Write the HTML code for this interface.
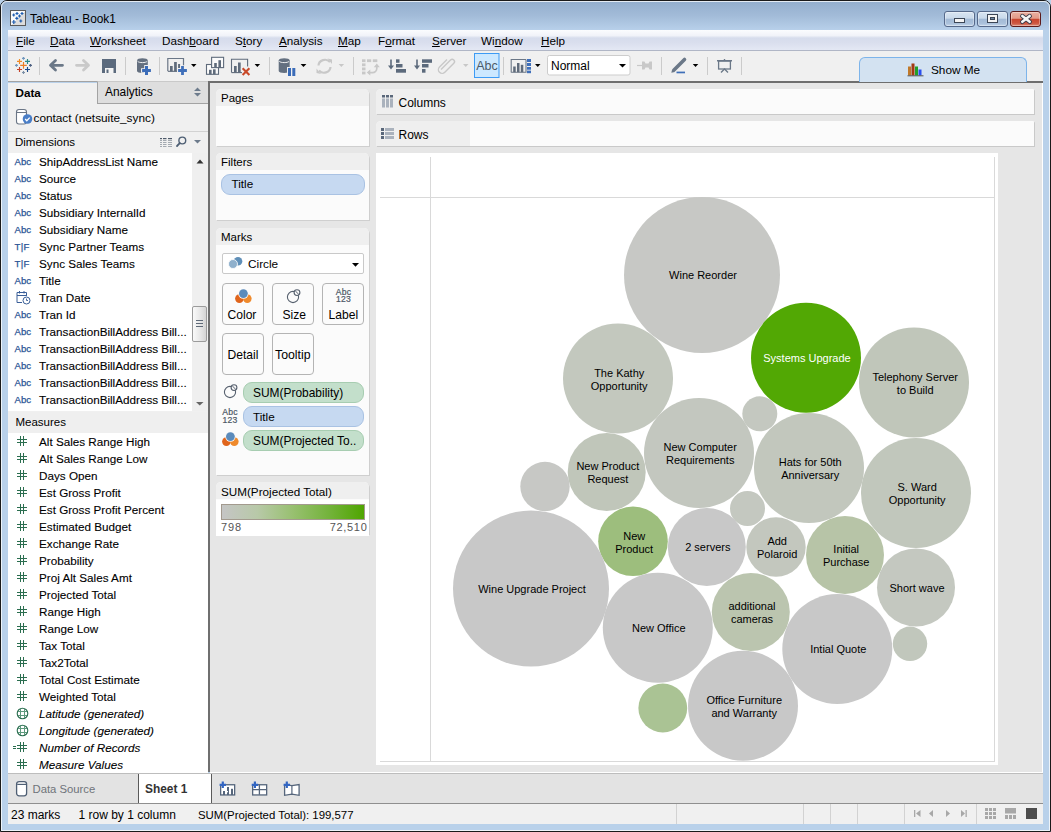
<!DOCTYPE html>
<html><head><meta charset="utf-8">
<style>
*{box-sizing:border-box;margin:0;padding:0}
html,body{width:1051px;height:832px;overflow:hidden;background:#b9d1ea}
body{font-family:"Liberation Sans",sans-serif;font-size:12px;color:#000;position:relative}
.a{position:absolute}
.t{position:absolute;white-space:nowrap;line-height:14px}
/* frame */
#outer{left:0;top:0;width:1051px;height:832px;border:1px solid #1a1a1a;border-radius:7px 7px 0 0}
#titlebar{left:1px;top:1px;width:1049px;height:29px;border-radius:6px 6px 0 0;background:linear-gradient(#93aecd,#a2bbd8 50%,#b8d0ea)}
.wbtn{position:absolute;top:10.5px;height:16.5px;border:1px solid #56698a;border-radius:3px;background:linear-gradient(#d9e5f2 0,#c9d9ea 45%,#a3bad6 50%,#a9c0da 80%,#c3d5ea 100%);box-shadow:inset 0 0 0 1px rgba(255,255,255,0.35)}
/* client */
#menubar{left:8px;top:30px;width:1035px;height:21px;background:linear-gradient(#fbfcfe 0,#f1f3f9 28%,#d6dcec 40%,#dadfee 65%,#e4e8f4 100%);border-bottom:1px solid #b0b6c6}
.menu{position:absolute;top:34px;font-size:11.7px;line-height:14px;white-space:nowrap;color:#000}
#toolbar{left:8px;top:51px;width:1035px;height:30px;background:#f0f0f0}
#tbline{left:208px;top:81px;width:835px;height:2px;background:#6e6e6e}
.sep{position:absolute;top:57px;width:1px;height:18px;background:#cfcfcf}
/* left panel */
#left{left:8px;top:83px;width:200px;height:690px;background:#f0f0f0}
#vsplit{left:208px;top:81px;width:2px;height:691px;background:#6f6f6f}
#mid{left:210px;top:83px;width:166px;height:689px;background:#e6e6e6}
#canvas{left:376px;top:83px;width:667px;height:689px;background:#e6e6e6}
.card{position:absolute;left:216px;width:153px;background:#fbfbfb;border-radius:5px 5px 0 0;box-shadow:1px 1px 0 #cfcfcf}
.card .hd{position:absolute;left:0;top:0;width:100%;height:17px;background:#efefef;border-radius:5px 5px 0 0}
.pill{position:absolute;border-radius:9px;border:1px solid #a9c2e3;background:#c6d9f1}
.pillg{position:absolute;border-radius:9px;border:1px solid #a7cdb1;background:#c3dfcb}
.mbtn{position:absolute;width:42px;height:42px;border:1px solid #b4b4b4;border-radius:4px;background:#fbfbfb}
.shelf{position:absolute;left:376px;width:658px;height:25px;background:#fbfbfb;border-radius:5px 1px 0 0;box-shadow:1px 1px 0 #c9c9c9}
.shelf .lb{position:absolute;left:0;top:0;width:94px;height:25px;background:#efefef;border-radius:5px 0 0 0}
#chart{left:376px;top:153px;width:622px;height:612px;background:#fff}
/* bottom */
#tabbar{left:8px;top:773px;width:1035px;height:30px;background:#e3e3e3}
#statusline{left:8px;top:803px;width:1035px;height:1px;background:#8f8f8f}
#status{left:8px;top:804px;width:1035px;height:20px;background:#f0f0f0}
.ssep{position:absolute;top:804px;width:1px;height:20px;background:#d2d2d2}
.row{position:absolute;left:39px;font-size:11.7px;-webkit-text-stroke:0.1px #000;white-space:nowrap;line-height:14px}
.ico{position:absolute;left:15px;font-size:9px;color:#44679a;white-space:nowrap;line-height:10px}
</style></head><body>
<div id="outer" class="a"></div>
<div id="titlebar" class="a"></div>
<div class="a" style="left:1px;top:1px;width:1049px;height:830px;border:1px solid rgba(255,255,255,0.75);border-radius:6px 6px 0 0"></div>
<div class="wbtn" style="left:944px;width:31px"></div>
<div class="wbtn" style="left:977px;width:31px"></div>
<div class="wbtn" style="left:1010px;width:31px;border-color:#5c1a1a;background:linear-gradient(#eab0a2 0,#e39a88 45%,#c9462f 52%,#cd5540 80%,#dc8a76 100%)"></div>

<div id="menubar" class="a"></div>
<div id="toolbar" class="a"></div>
<div id="tbline" class="a"></div>
<!--TITLE-->
<svg class="a" style="left:10px;top:10px" width="16" height="16" viewBox="0 0 16 16">
<rect x="0.5" y="0.5" width="15" height="15" fill="#fbfbfb" stroke="#5a5a5a"/>
<path d="M15 1.5L1.5 15H15z" fill="#dcdcdc"/>
<g stroke="#1d5cb0" stroke-width="1.2">
<path d="M3.7 3.5v3M2.2 5h3"/><path d="M7 2v3M5.5 3.5h3"/><path d="M12 2v3M10.5 3.5h3"/>
<path d="M9.5 4.5v3M8 6h3"/><path d="M6.8 6.8v3M5.3 8.3h3"/><path d="M3.8 10v4M1.8 12h4"/><path d="M10.8 9.5v3M9.3 11h3"/>
</g></svg>
<div class="t" style="left:30px;top:12px;font-size:11.9px;color:#000">Tableau - Book1</div>
<svg class="a" style="left:944px;top:10px" width="97" height="17">
<rect x="10.5" y="8.5" width="10" height="4" fill="#f4f4f4" stroke="#3c4656" stroke-width="1"/>
<rect x="43.5" y="4.5" width="10" height="8" fill="#f4f4f4" stroke="#3c4656" stroke-width="1"/>
<rect x="46.5" y="7.5" width="4" height="2" fill="#6f87a3" stroke="#3c4656" stroke-width="1"/>
<path d="M78.3 6L85.7 11.8M85.7 6L78.3 11.8" stroke="#3a3a48" stroke-width="4.4" stroke-linecap="round"/>
<path d="M78.3 6L85.7 11.8M85.7 6L78.3 11.8" stroke="#f4f4f4" stroke-width="2.6" stroke-linecap="round"/>
</svg>
<!--MENU-->
<div class="menu" style="left:16px"><u>F</u>ile</div>
<div class="menu" style="left:50px"><u>D</u>ata</div>
<div class="menu" style="left:90px"><u>W</u>orksheet</div>
<div class="menu" style="left:162px">Dash<u>b</u>oard</div>
<div class="menu" style="left:235px">S<u>t</u>ory</div>
<div class="menu" style="left:279px"><u>A</u>nalysis</div>
<div class="menu" style="left:338px"><u>M</u>ap</div>
<div class="menu" style="left:378px">F<u>o</u>rmat</div>
<div class="menu" style="left:432px"><u>S</u>erver</div>
<div class="menu" style="left:481px">Wi<u>n</u>dow</div>
<div class="menu" style="left:541px"><u>H</u>elp</div>
<!--TOOLBAR-->
<svg class="a" style="left:0;top:51px" width="760" height="30">
<g transform="translate(0,-51)">
<!-- tableau logo -->
<g stroke-width="1.15">
<path d="M23.5 62.1v6.6M20.2 65.4h6.6" stroke="#ee7d22"/>
<path d="M23.5 56.9v2.9M22.05 58.35h2.9" stroke="#6f96bd"/>
<path d="M23.5 71.05v2.9M22.05 72.5h2.9" stroke="#7a8ea6"/>
<path d="M16.5 63.95v2.9M15.05 65.4h2.9" stroke="#6f96bd"/>
<path d="M30.5 63.95v2.9M29.05 65.4h2.9" stroke="#4c5f80"/>
<path d="M19.5 58.9v5M17 61.4h5" stroke="#f08a25"/>
<path d="M27.5 58.9v5M25 61.4h5" stroke="#2b8a88"/>
<path d="M19.5 67v5M17 69.5h5" stroke="#c4432b"/>
<path d="M27.5 67v5M25 69.5h5" stroke="#1b4a88"/>
</g>
<g fill="#cbcbcb">
<rect x="39" y="57" width="1" height="18"/><rect x="125" y="57" width="1" height="18"/><rect x="159" y="57" width="1" height="18"/>
<rect x="269" y="57" width="1" height="18"/><rect x="353" y="57" width="1" height="18"/><rect x="503" y="57" width="1" height="18"/>
<rect x="661" y="57" width="1" height="18"/><rect x="707" y="57" width="1" height="18"/><rect x="741" y="57" width="1" height="18"/>
</g>
<!-- back / forward -->
<path d="M62.5 65.3H51 M55.5 60.5L50.5 65.3L55.5 70.1" fill="none" stroke="#6b7888" stroke-width="2.8" stroke-linecap="round" stroke-linejoin="round"/>
<path d="M76.5 65.3H88 M83.5 60.5L88.5 65.3L83.5 70.1" fill="none" stroke="#c9c9c9" stroke-width="2.8" stroke-linecap="round" stroke-linejoin="round"/>
<!-- save -->
<rect x="102" y="59" width="14" height="14" fill="#5b6a7d"/>
<rect x="105" y="68" width="8.5" height="5" fill="#f4f4f4"/>
<rect x="106.5" y="69.5" width="2" height="3.5" fill="#5b6a7d"/>
<!-- db plus -->
<path d="M137 60.5v10.5c0 1.2 2.4 1.9 5.4 1.9s5.4-.7 5.4-1.9V60.5c0-1.5-2.4-2.3-5.4-2.3s-5.4 .8-5.4 2.3z" fill="#647080"/>
<path d="M137.6 61.3c.8 .9 2.6 1.3 4.8 1.3s4-.4 4.8-1.3" fill="none" stroke="#f4f4f4" stroke-width="1"/>
<path d="M146.5 65v11M141 70.5h11" stroke="#f0f0f0" stroke-width="4.6"/>
<path d="M146.5 66.1v8.8M142.1 70.5h8.8" stroke="#3b6cb8" stroke-width="3"/>
<!-- chart plus -->
<path d="M167.8 71V58.5H183.5V66" fill="none" stroke="#6b7787" stroke-width="1.2"/>
<rect x="170" y="66" width="2.7" height="5.5" fill="#5f6b7b"/><rect x="174.1" y="62" width="2.7" height="9.5" fill="#5f6b7b"/><rect x="178.1" y="64" width="2" height="4" fill="#5f6b7b"/><path d="M167.8 71.3H177" stroke="#5f6b7b" stroke-width="1.1"/>
<path d="M182.5 65.3v10.4M177.3 70.5h10.4" stroke="#f0f0f0" stroke-width="4.5"/>
<path d="M182.5 66.1v8.8M178.1 70.5h8.8" stroke="#3f6fba" stroke-width="2.8"/>
<path d="M191 64h5.5l-2.75 3z" fill="#000"/>
<!-- duplicate -->
<rect x="206.5" y="64.5" width="12" height="9.8" fill="#fbfbfb" stroke="#5f6b7b" stroke-width="1.1"/>
<rect x="209" y="69.8" width="2.6" height="4.5" fill="#5f6b7b"/><rect x="213" y="69.3" width="2.6" height="5" fill="#5f6b7b"/>
<rect x="211.6" y="57.3" width="12" height="10.3" fill="#fbfbfb" stroke="#5f6b7b" stroke-width="1.1"/>
<rect x="214.2" y="63" width="2.6" height="4.6" fill="#5f6b7b"/><rect x="218.4" y="60.2" width="2.6" height="7.4" fill="#5f6b7b"/>
<!-- clear -->
<path d="M231.5 72.6V59.2H247.6V66.5" fill="none" stroke="#5f6b7b" stroke-width="1.1"/>
<path d="M231.5 72.6H242" fill="none" stroke="#5f6b7b" stroke-width="1.1"/>
<rect x="234" y="66" width="2.7" height="6.5" fill="#5f6b7b"/><rect x="238" y="62.5" width="2.7" height="10" fill="#5f6b7b"/>
<path d="M241.5 68l3 3" stroke="#f0f0f0" stroke-width="3"/>
<path d="M242.6 68.3l6.8 6.8M249.4 68.3l-6.8 6.8" stroke="#c94a2a" stroke-width="2.1"/>
<path d="M254.6 64h5.5l-2.75 3z" fill="#000"/>
<!-- db pause -->
<path d="M278.7 60.5v10.5c0 1.2 2.4 1.9 5.5 1.9s5.5-.7 5.5-1.9V60.5c0-1.5-2.4-2.3-5.5-2.3s-5.5 .8-5.5 2.3z" fill="#647080"/>
<path d="M279.3 61.3c.8 .9 2.6 1.3 4.9 1.3s4.1-.4 4.9-1.3" fill="none" stroke="#f4f4f4" stroke-width="1"/>
<rect x="287" y="67" width="9.5" height="10" fill="#f0f0f0"/>
<rect x="288" y="68" width="3" height="8" fill="#3b6cb8"/><rect x="292.3" y="68" width="3" height="8" fill="#3b6cb8"/>
<path d="M300.6 64h5.8l-2.9 3z" fill="#000"/>
<!-- refresh light -->
<path d="M318.5 65.5a6.5 6 0 0 1 11.5-3.5M330.5 67a6.5 6 0 0 1-11.5 3.5" fill="none" stroke="#c8c8c8" stroke-width="2.2"/>
<path d="M327.5 58.5l4.5 1v4.5z M321 74l-4.5-1v-4.5z" fill="#c8c8c8"/>
<path d="M338.6 64h5.5l-2.75 3z" fill="#c8c8c8"/>
<!-- swap light -->
<g fill="#c8c8c8"><rect x="362" y="59.3" width="3.5" height="2.8"/><rect x="367" y="59.3" width="4.2" height="2.8"/><rect x="372.8" y="59.3" width="4.5" height="2.8"/>
<rect x="362" y="63.4" width="3.5" height="2.8"/><rect x="362" y="67.5" width="3.5" height="2.8"/><rect x="362" y="71.6" width="3.5" height="2.8"/></g>
<path d="M369.5 72.6h3a4.3 4.3 0 0 0 4.3-4.3v-1.8" fill="none" stroke="#c8c8c8" stroke-width="1.7"/>
<path d="M373.8 67.2l3-3.6 3 3.6z M370.3 69.6l-3.6 3 3.6 3z" fill="#c8c8c8"/>
<!-- sort asc -->
<path d="M391 59.5v8" stroke="#5c6a7c" stroke-width="1.6"/><path d="M388 65.5l3 4 3-4z" fill="#5c6a7c"/>
<rect x="396" y="59.3" width="3.5" height="3.5" fill="#5c6a7c"/><rect x="396" y="64" width="6.5" height="3.5" fill="#5c6a7c"/><rect x="396" y="69" width="10" height="3.7" fill="#5c6a7c"/>
<!-- sort desc -->
<path d="M417 59.5v8" stroke="#5c6a7c" stroke-width="1.6"/><path d="M414 65.5l3 4 3-4z" fill="#5c6a7c"/>
<rect x="422" y="59.3" width="10" height="3.5" fill="#5c6a7c"/><rect x="422" y="64" width="6.5" height="3.5" fill="#5c6a7c"/><rect x="422" y="69" width="3.5" height="3.7" fill="#5c6a7c"/>
<!-- paperclip light -->
<path d="M441 70.5l9.5-9.5a2.3 2.3 0 0 1 3.3 3.3l-9 9a3.7 3.7 0 0 1-5.3-5.3l7.5-7.5" fill="none" stroke="#c8c8c8" stroke-width="1.4" transform="translate(0,-1)"/>
<path d="M463 64h5.5l-2.75 3z" fill="#c8c8c8"/>
<!-- Abc -->
<rect x="474.5" y="53.5" width="24.5" height="24" fill="#cce8ff" stroke="#3d9bf5" stroke-width="1"/>
<text x="487" y="69.8" font-family="Liberation Sans" font-size="12.5" fill="#4b5868" text-anchor="middle">Abc</text>
<!-- chart legend -->
<path d="M511.2 72.5V59.5H526" fill="none" stroke="#6b7787" stroke-width="1.1"/>
<path d="M511.2 72.2H526V59.5" fill="none" stroke="#6b7787" stroke-width="1.1"/>
<rect x="513.2" y="66.5" width="2.5" height="5.7" fill="#5f6b7b"/><rect x="517" y="63" width="2.5" height="9.2" fill="#5f6b7b"/><rect x="520.8" y="64.8" width="2.5" height="7.4" fill="#5f6b7b"/>
<rect x="527" y="59" width="4" height="3" fill="#3f6fba"/><rect x="527" y="63" width="4" height="3" fill="#3f6fba"/><rect x="527" y="67" width="4" height="2.7" fill="#3f6fba"/><rect x="527" y="70.6" width="4" height="2.6" fill="#3f6fba"/>
<path d="M535 64h5.5l-2.75 3z" fill="#000"/>
<!-- Normal dropdown -->
<rect x="547.5" y="55.5" width="82.5" height="19.5" rx="2" fill="#fff" stroke="#cdcdcd"/>
<text x="551" y="69.5" font-family="Liberation Sans" font-size="12" fill="#000">Normal</text>
<path d="M619 64h7l-3.5 3.5z" fill="#000"/>
<!-- pin light -->
<path d="M637 65.5h6" stroke="#c8c8c8" stroke-width="1.2"/>
<path d="M642 61.5h2.5l1 2h3l1-2h2.5v8h-2.5l-1-2h-3l-1 2h-2.5z" fill="#c8c8c8"/>
<!-- pen -->
<path d="M674 70L684.5 59.5" stroke="#6b7888" stroke-width="3.6" stroke-linecap="round"/>
<path d="M671.3 72.8l.9-3.6 2.7 2.7z" fill="#6b7888"/>
<rect x="676.5" y="71.6" width="8.5" height="1.7" fill="#3e6fb8"/>
<path d="M692.8 64h5.5l-2.75 3z" fill="#000"/>
<!-- presentation -->
<rect x="717" y="60" width="15" height="1.5" fill="#6b7888"/>
<rect x="718.6" y="61" width="11.8" height="8" fill="none" stroke="#6b7888" stroke-width="1.3"/>
<path d="M721 72.5l3.5-3.5 3.5 3.5" fill="none" stroke="#6b7888" stroke-width="1.3"/>
<rect x="723.8" y="59" width="1.4" height="1.5" fill="#6b7888"/>
</g></svg>

<!--/TOOLBAR-->
<!--SHOWME-->
<div class="a" style="left:859px;top:57px;width:168px;height:25px;background:#d3e2f1;border:1px solid #7db4ea;border-bottom:none;border-radius:6px 6px 0 0"></div>
<svg class="a" style="left:906px;top:62px" width="19" height="15">
<rect x="2" y="4.5" width="3" height="9" fill="#c0792a"/><rect x="5.5" y="1.5" width="3" height="12" fill="#a33a12"/><rect x="9" y="4.5" width="3" height="9" fill="#22a02a"/><rect x="12.5" y="7.5" width="3" height="6" fill="#2a4ef0"/>
<rect x="1.5" y="13.3" width="16" height="1" fill="#555"/>
</svg>
<div class="t" style="left:931px;top:63px;font-size:11.8px;line-height:14px">Show Me</div>
<!--/SHOWME-->


<div id="left" class="a"></div>
<div id="vsplit" class="a"></div>
<!--LEFT-->
<div class="a" style="left:8px;top:81px;width:90px;height:1px;background:#a3a3a3"></div>
<div class="a" style="left:97px;top:81px;width:111px;height:23px;background:#dedede;border-left:1px solid #a3a3a3;border-bottom:1px solid #a3a3a3;border-top:1px solid #c9c9c9"></div>
<div class="t" style="left:15.5px;top:86px;font-size:11.7px;font-weight:bold;line-height:14px">Data</div>
<div class="t" style="left:105px;top:85px;font-size:11.9px;line-height:14px">Analytics</div>
<svg class="a" style="left:193px;top:87px" width="9" height="10"><path d="M1 4h7L4.5 0.5z M1 6h7L4.5 9.5z" fill="#6d7b8c"/></svg>
<svg class="a" style="left:15px;top:108px" width="18" height="18">
<rect x="1.5" y="1.5" width="10" height="14.5" rx="2.5" fill="#fff" stroke="#6b7686" stroke-width="1.1"/>
<path d="M2 4.5h9" stroke="#6b7686" stroke-width="1"/>
<circle cx="12.5" cy="11" r="4.8" fill="#4a7ec7"/>
<path d="M10.2 11l1.6 1.7 2.9-3.1" fill="none" stroke="#fff" stroke-width="1.3"/>
</svg>
<div class="t" style="left:33.5px;top:110.5px;font-size:11.8px;line-height:14px">contact (netsuite_sync)</div>
<div class="a" style="left:8px;top:131px;width:200px;height:1px;background:#d2d2d2"></div>
<div class="t" style="left:15px;top:135px;font-size:11.5px;line-height:14px">Dimensions</div>
<svg class="a" style="left:158px;top:136px" width="46" height="12">
<g fill="#a3a9b0"><rect x="2" y="4" width="2" height="1"/><rect x="5" y="4" width="3.5" height="1"/><rect x="10" y="4" width="4" height="1"/>
<rect x="2" y="6" width="2" height="1"/><rect x="5" y="6" width="3.5" height="1"/><rect x="10" y="6" width="4" height="1"/>
<rect x="2" y="8" width="2" height="1"/><rect x="5" y="8" width="3.5" height="1"/><rect x="10" y="8" width="4" height="1"/>
<rect x="2" y="10" width="2" height="1"/><rect x="5" y="10" width="3.5" height="1"/><rect x="10" y="10" width="4" height="1"/></g>
<g fill="#4e5a6a"><rect x="2" y="2" width="2" height="1.2"/><rect x="5" y="2" width="3.5" height="1.2"/><rect x="10" y="2" width="4" height="1.2"/></g>
<circle cx="24.3" cy="4.5" r="3.4" fill="none" stroke="#4e5f74" stroke-width="1.4"/><path d="M21.8 7.2l-2.8 2.8" stroke="#4e5f74" stroke-width="1.8" stroke-linecap="round"/>
<path d="M36 4h7l-3.5 3.5z" fill="#6d7b8c"/>
</svg>
<div class="a" style="left:8px;top:153px;width:184px;height:258px;background:#fff"></div>
<div class="a" style="left:192px;top:153px;width:16px;height:258px;background:#efefef"></div>
<svg class="a" style="left:192px;top:153px" width="16" height="258">
<path d="M4.5 10.5h7L8 6.5z" fill="#333"/>
<defs><linearGradient id="thg" x1="0" x2="1"><stop offset="0" stop-color="#fbfbfb"/><stop offset="0.5" stop-color="#e9e9e9"/><stop offset="1" stop-color="#d2d2d2"/></linearGradient></defs><rect x="0.5" y="153.5" width="14" height="35" rx="1.5" fill="url(#thg)" stroke="#9b9b9b"/>
<path d="M4 167.5h7M4 170.5h7M4 173.5h7" stroke="#5f6a78" stroke-width="1.1"/>
<path d="M4 249h7.5L7.75 252.5z" fill="#666"/>
</svg>
<div class="a" style="left:8px;top:411.5px;width:200px;height:21.5px;background:#efefef"></div>
<div class="t" style="left:15.5px;top:415px;font-size:11.5px;line-height:14px">Measures</div>
<div class="a" style="left:8px;top:433px;width:200px;height:340px;background:#fff"></div>

<div class="t" style="left:14.5px;top:155.5px;font-size:9.6px;line-height:12px;color:#2c5596;-webkit-text-stroke:0.25px #2c5596">Abc</div>
<div class="row" style="top:153.0px;line-height:17px">ShipAddressList Name</div>
<div class="t" style="left:14.5px;top:172.5px;font-size:9.6px;line-height:12px;color:#2c5596;-webkit-text-stroke:0.25px #2c5596">Abc</div>
<div class="row" style="top:170.0px;line-height:17px">Source</div>
<div class="t" style="left:14.5px;top:189.5px;font-size:9.6px;line-height:12px;color:#2c5596;-webkit-text-stroke:0.25px #2c5596">Abc</div>
<div class="row" style="top:187.0px;line-height:17px">Status</div>
<div class="t" style="left:14.5px;top:206.5px;font-size:9.6px;line-height:12px;color:#2c5596;-webkit-text-stroke:0.25px #2c5596">Abc</div>
<div class="row" style="top:204.0px;line-height:17px">Subsidiary InternalId</div>
<div class="t" style="left:14.5px;top:223.5px;font-size:9.6px;line-height:12px;color:#2c5596;-webkit-text-stroke:0.25px #2c5596">Abc</div>
<div class="row" style="top:221.0px;line-height:17px">Subsidiary Name</div>
<div class="t" style="left:14.5px;top:240.5px;font-size:9.6px;line-height:12px;color:#2c5596;letter-spacing:0.3px;-webkit-text-stroke:0.25px #2c5596">T|F</div>
<div class="row" style="top:238.0px;line-height:17px">Sync Partner Teams</div>
<div class="t" style="left:14.5px;top:257.5px;font-size:9.6px;line-height:12px;color:#2c5596;letter-spacing:0.3px;-webkit-text-stroke:0.25px #2c5596">T|F</div>
<div class="row" style="top:255.0px;line-height:17px">Sync Sales Teams</div>
<div class="t" style="left:14.5px;top:274.5px;font-size:9.6px;line-height:12px;color:#2c5596;-webkit-text-stroke:0.25px #2c5596">Abc</div>
<div class="row" style="top:272.0px;line-height:17px">Title</div>
<svg class="a" style="left:16px;top:289.5px" width="16" height="15"><path d="M1 2.5h9.5v3.5 M1 2.5v10h5 M1 5.5h9" fill="none" stroke="#3a5f98" stroke-width="1"/><path d="M3.5 1v2.5M8 1v2.5" stroke="#3a5f98"/><circle cx="10.5" cy="10.5" r="3.5" fill="#fff" stroke="#3a5f98"/><path d="M10.5 8.5v2h1.5" fill="none" stroke="#3a5f98" stroke-width="0.9"/></svg>
<div class="row" style="top:289.0px;line-height:17px">Tran Date</div>
<div class="t" style="left:14.5px;top:308.5px;font-size:9.6px;line-height:12px;color:#2c5596;-webkit-text-stroke:0.25px #2c5596">Abc</div>
<div class="row" style="top:306.0px;line-height:17px">Tran Id</div>
<div class="t" style="left:14.5px;top:325.5px;font-size:9.6px;line-height:12px;color:#2c5596;-webkit-text-stroke:0.25px #2c5596">Abc</div>
<div class="row" style="top:323.0px;line-height:17px">TransactionBillAddress Bill...</div>
<div class="t" style="left:14.5px;top:342.5px;font-size:9.6px;line-height:12px;color:#2c5596;-webkit-text-stroke:0.25px #2c5596">Abc</div>
<div class="row" style="top:340.0px;line-height:17px">TransactionBillAddress Bill...</div>
<div class="t" style="left:14.5px;top:359.5px;font-size:9.6px;line-height:12px;color:#2c5596;-webkit-text-stroke:0.25px #2c5596">Abc</div>
<div class="row" style="top:357.0px;line-height:17px">TransactionBillAddress Bill...</div>
<div class="t" style="left:14.5px;top:376.5px;font-size:9.6px;line-height:12px;color:#2c5596;-webkit-text-stroke:0.25px #2c5596">Abc</div>
<div class="row" style="top:374.0px;line-height:17px">TransactionBillAddress Bill...</div>
<div class="t" style="left:14.5px;top:393.5px;font-size:9.6px;line-height:12px;color:#2c5596;-webkit-text-stroke:0.25px #2c5596">Abc</div>
<div class="row" style="top:391.0px;line-height:17px">TransactionBillAddress Bill...</div>
<svg class="a" style="left:16px;top:435px" width="12" height="12"><path d="M4.5 1v10M7.5 1v10M1 4.5h10M1 7.5h10" stroke="#2b6e50" stroke-width="1"/></svg>
<div class="row" style="top:433.0px;line-height:17px;">Alt Sales Range High</div>
<svg class="a" style="left:16px;top:452px" width="12" height="12"><path d="M4.5 1v10M7.5 1v10M1 4.5h10M1 7.5h10" stroke="#2b6e50" stroke-width="1"/></svg>
<div class="row" style="top:450.0px;line-height:17px;">Alt Sales Range Low</div>
<svg class="a" style="left:16px;top:469px" width="12" height="12"><path d="M4.5 1v10M7.5 1v10M1 4.5h10M1 7.5h10" stroke="#2b6e50" stroke-width="1"/></svg>
<div class="row" style="top:467.0px;line-height:17px;">Days Open</div>
<svg class="a" style="left:16px;top:486px" width="12" height="12"><path d="M4.5 1v10M7.5 1v10M1 4.5h10M1 7.5h10" stroke="#2b6e50" stroke-width="1"/></svg>
<div class="row" style="top:484.0px;line-height:17px;">Est Gross Profit</div>
<svg class="a" style="left:16px;top:503px" width="12" height="12"><path d="M4.5 1v10M7.5 1v10M1 4.5h10M1 7.5h10" stroke="#2b6e50" stroke-width="1"/></svg>
<div class="row" style="top:501.0px;line-height:17px;">Est Gross Profit Percent</div>
<svg class="a" style="left:16px;top:520px" width="12" height="12"><path d="M4.5 1v10M7.5 1v10M1 4.5h10M1 7.5h10" stroke="#2b6e50" stroke-width="1"/></svg>
<div class="row" style="top:518.0px;line-height:17px;">Estimated Budget</div>
<svg class="a" style="left:16px;top:537px" width="12" height="12"><path d="M4.5 1v10M7.5 1v10M1 4.5h10M1 7.5h10" stroke="#2b6e50" stroke-width="1"/></svg>
<div class="row" style="top:535.0px;line-height:17px;">Exchange Rate</div>
<svg class="a" style="left:16px;top:554px" width="12" height="12"><path d="M4.5 1v10M7.5 1v10M1 4.5h10M1 7.5h10" stroke="#2b6e50" stroke-width="1"/></svg>
<div class="row" style="top:552.0px;line-height:17px;">Probability</div>
<svg class="a" style="left:16px;top:571px" width="12" height="12"><path d="M4.5 1v10M7.5 1v10M1 4.5h10M1 7.5h10" stroke="#2b6e50" stroke-width="1"/></svg>
<div class="row" style="top:569.0px;line-height:17px;">Proj Alt Sales Amt</div>
<svg class="a" style="left:16px;top:588px" width="12" height="12"><path d="M4.5 1v10M7.5 1v10M1 4.5h10M1 7.5h10" stroke="#2b6e50" stroke-width="1"/></svg>
<div class="row" style="top:586.0px;line-height:17px;">Projected Total</div>
<svg class="a" style="left:16px;top:605px" width="12" height="12"><path d="M4.5 1v10M7.5 1v10M1 4.5h10M1 7.5h10" stroke="#2b6e50" stroke-width="1"/></svg>
<div class="row" style="top:603.0px;line-height:17px;">Range High</div>
<svg class="a" style="left:16px;top:622px" width="12" height="12"><path d="M4.5 1v10M7.5 1v10M1 4.5h10M1 7.5h10" stroke="#2b6e50" stroke-width="1"/></svg>
<div class="row" style="top:620.0px;line-height:17px;">Range Low</div>
<svg class="a" style="left:16px;top:639px" width="12" height="12"><path d="M4.5 1v10M7.5 1v10M1 4.5h10M1 7.5h10" stroke="#2b6e50" stroke-width="1"/></svg>
<div class="row" style="top:637.0px;line-height:17px;">Tax Total</div>
<svg class="a" style="left:16px;top:656px" width="12" height="12"><path d="M4.5 1v10M7.5 1v10M1 4.5h10M1 7.5h10" stroke="#2b6e50" stroke-width="1"/></svg>
<div class="row" style="top:654.0px;line-height:17px;">Tax2Total</div>
<svg class="a" style="left:16px;top:673px" width="12" height="12"><path d="M4.5 1v10M7.5 1v10M1 4.5h10M1 7.5h10" stroke="#2b6e50" stroke-width="1"/></svg>
<div class="row" style="top:671.0px;line-height:17px;">Total Cost Estimate</div>
<svg class="a" style="left:16px;top:690px" width="12" height="12"><path d="M4.5 1v10M7.5 1v10M1 4.5h10M1 7.5h10" stroke="#2b6e50" stroke-width="1"/></svg>
<div class="row" style="top:688.0px;line-height:17px;">Weighted Total</div>
<svg class="a" style="left:16px;top:707px" width="13" height="13"><circle cx="6.5" cy="6.5" r="5.3" fill="none" stroke="#2b6e50" stroke-width="1.1"/><path d="M4.5 2v9M8.5 2v9M2 4.5h9M2 8.5h9" stroke="#5f9a7e" stroke-width="1"/></svg>
<div class="row" style="top:705.0px;line-height:17px;font-style:italic;">Latitude (generated)</div>
<svg class="a" style="left:16px;top:724px" width="13" height="13"><circle cx="6.5" cy="6.5" r="5.3" fill="none" stroke="#2b6e50" stroke-width="1.1"/><path d="M4.5 2v9M8.5 2v9M2 4.5h9M2 8.5h9" stroke="#5f9a7e" stroke-width="1"/></svg>
<div class="row" style="top:722.0px;line-height:17px;font-style:italic;">Longitude (generated)</div>
<svg class="a" style="left:12px;top:741px" width="16" height="12"><path d="M1 5.5h3M1 7.5h3" stroke="#2b6e50" stroke-width="1"/><path d="M8.5 1v10M11.5 1v10M5 4.5h10M5 7.5h10" stroke="#2b6e50" stroke-width="1"/></svg>
<div class="row" style="top:739.0px;line-height:17px;font-style:italic;">Number of Records</div>
<svg class="a" style="left:16px;top:758px" width="12" height="12"><path d="M4.5 1v10M7.5 1v10M1 4.5h10M1 7.5h10" stroke="#2b6e50" stroke-width="1"/></svg>
<div class="row" style="top:756.0px;line-height:17px;font-style:italic;">Measure Values</div>
<!--/LEFT-->
<div id="mid" class="a"></div>
<div id="canvas" class="a"></div>

<div class="card" style="top:89px;height:57px"><div class="hd"></div></div>
<div class="card" style="top:153px;height:67px"><div class="hd"></div></div>
<div class="card" style="top:228px;height:247px"><div class="hd"></div></div>
<div class="card" style="top:482px;height:52px"><div class="hd"></div></div>

<div class="shelf" style="top:89px"><div class="lb"></div></div>
<div class="shelf" style="top:121px"><div class="lb"></div></div>
<div id="chart" class="a"></div>
<div class="a" style="left:380px;top:197px;width:615px;height:1px;background:#d9d9d9"></div>
<div class="a" style="left:380px;top:761px;width:615px;height:1px;background:#d9d9d9"></div>
<div class="a" style="left:430px;top:157px;width:1px;height:605px;background:#d9d9d9"></div>
<div class="a" style="left:994px;top:157px;width:1px;height:605px;background:#d9d9d9"></div>
<!--BUBBLES-->
<svg class="a" style="left:0;top:0" width="1051" height="832">
<g font-family="Liberation Sans" font-size="11" text-anchor="middle">
<circle cx="702" cy="275" r="78" fill="rgb(199, 200, 197)"/>
<circle cx="806" cy="357.7" r="55" fill="rgb(82, 168, 4)"/>
<circle cx="914" cy="382.5" r="55" fill="rgb(192, 198, 186)"/>
<circle cx="618" cy="378.5" r="55" fill="rgb(195, 200, 190)"/>
<circle cx="759.8" cy="413.8" r="17.5" fill="rgb(196, 200, 192)"/>
<circle cx="699" cy="453" r="55" fill="rgb(195, 199, 191)"/>
<circle cx="809" cy="468" r="55" fill="rgb(194, 199, 189)"/>
<circle cx="916" cy="493" r="55" fill="rgb(193, 199, 188)"/>
<circle cx="606.7" cy="472" r="39" fill="rgb(192, 198, 186)"/>
<circle cx="545" cy="486.5" r="24.7" fill="rgb(199, 200, 197)"/>
<circle cx="747.5" cy="508.5" r="17.5" fill="rgb(196, 200, 192)"/>
<circle cx="633" cy="541.3" r="34.8" fill="rgb(157, 190, 125)"/>
<circle cx="706.8" cy="547" r="39" fill="rgb(200, 200, 200)"/>
<circle cx="776" cy="547" r="29.7" fill="rgb(195, 199, 190)"/>
<circle cx="845" cy="555" r="39" fill="rgb(183, 196, 167)"/>
<circle cx="531" cy="588.6" r="78" fill="rgb(200, 200, 200)"/>
<circle cx="916" cy="587.4" r="39" fill="rgb(196, 200, 192)"/>
<circle cx="657.8" cy="627.8" r="55" fill="rgb(200, 200, 200)"/>
<circle cx="750.8" cy="612" r="39" fill="rgb(187, 197, 175)"/>
<circle cx="837.3" cy="649" r="55" fill="rgb(200, 200, 200)"/>
<circle cx="910" cy="643.8" r="17.2" fill="rgb(193, 199, 188)"/>
<circle cx="662.8" cy="708" r="24.4" fill="rgb(170, 195, 148)"/>
<circle cx="743" cy="705.7" r="55" fill="rgb(200, 200, 200)"/>
<text x="703" y="279.2" fill="#000">Wine Reorder</text>
<text x="807" y="361.9" fill="#fff">Systems Upgrade</text>
<text x="915.2" y="380.7" fill="#000">Telephony Server</text>
<text x="915.2" y="393.7" fill="#000">to Build</text>
<text x="619.2" y="376.7" fill="#000">The Kathy</text>
<text x="619.2" y="389.7" fill="#000">Opportunity</text>
<text x="700.2" y="451.2" fill="#000">New Computer</text>
<text x="700.2" y="464.2" fill="#000">Requirements</text>
<text x="810.2" y="466.2" fill="#000">Hats for 50th</text>
<text x="810.2" y="479.2" fill="#000">Anniversary</text>
<text x="917.2" y="491.2" fill="#000">S. Ward</text>
<text x="917.2" y="504.2" fill="#000">Opportunity</text>
<text x="607.9000000000001" y="470.2" fill="#000">New Product</text>
<text x="607.9000000000001" y="483.2" fill="#000">Request</text>
<text x="634.2" y="539.5" fill="#000">New</text>
<text x="634.2" y="552.5" fill="#000">Product</text>
<text x="707.8" y="551.2" fill="#000">2 servers</text>
<text x="777.2" y="545.2" fill="#000">Add</text>
<text x="777.2" y="558.2" fill="#000">Polaroid</text>
<text x="846.2" y="553.2" fill="#000">Initial</text>
<text x="846.2" y="566.2" fill="#000">Purchase</text>
<text x="532" y="592.8000000000001" fill="#000">Wine Upgrade Project</text>
<text x="917" y="591.6" fill="#000">Short wave</text>
<text x="658.8" y="632.0" fill="#000">New Office</text>
<text x="752.0" y="610.2" fill="#000">additional</text>
<text x="752.0" y="623.2" fill="#000">cameras</text>
<text x="838.3" y="653.2" fill="#000">Intial Quote</text>
<text x="744.2" y="703.9000000000001" fill="#000">Office Furniture</text>
<text x="744.2" y="716.9000000000001" fill="#000">and Warranty</text>
</g></svg>
<!--/BUBBLES-->


<div id="tabbar" class="a"></div>
<div id="statusline" class="a"></div>
<div id="status" class="a"></div>
<!--MID-->
<div class="t" style="left:221px;top:91px;font-size:11.5px;line-height:14px">Pages</div>
<div class="t" style="left:221px;top:155px;font-size:11.5px;line-height:14px">Filters</div>
<div class="pill" style="left:221px;top:174px;width:144px;height:21px"></div>
<div class="t" style="left:231.5px;top:177px;font-size:11.7px;line-height:14px">Title</div>
<div class="t" style="left:221px;top:230px;font-size:11.5px;line-height:14px">Marks</div>
<div class="a" style="left:222px;top:253px;width:141.5px;height:21px;background:#fff;border:1px solid #c9c9c9;border-radius:2px"></div>
<svg class="a" style="left:227px;top:256px" width="18" height="14"><circle cx="11" cy="5.3" r="4.3" fill="#5f8fb8"/><circle cx="6" cy="8" r="4.5" fill="#8fb0cc" stroke="#fff" stroke-width="0.8"/></svg>
<div class="t" style="left:248px;top:256.5px;font-size:11.8px;line-height:14px">Circle</div>
<svg class="a" style="left:351.5px;top:262.5px" width="8" height="5"><path d="M0 0h7L3.5 3.8z" fill="#000"/></svg>
<div class="mbtn" style="left:222px;top:283px"></div>
<div class="mbtn" style="left:272px;top:283px"></div>
<div class="mbtn" style="left:322px;top:283px"></div>
<div class="mbtn" style="left:222px;top:333px"></div>
<div class="mbtn" style="left:272px;top:333px"></div>
<svg class="a" style="left:233px;top:288px" width="20" height="18"><circle cx="6.4" cy="10.6" r="4.3" fill="#e0651c"/><circle cx="14.3" cy="10.6" r="4.3" fill="#ef8a2c"/><circle cx="10.4" cy="5.6" r="5.2" fill="#fbfbfb"/><circle cx="10.4" cy="5.6" r="4.4" fill="#5b8bbb"/></svg>
<div class="t" style="left:227.5px;top:308px;font-size:12.1px;line-height:14px">Color</div>
<svg class="a" style="left:284px;top:288px" width="18" height="16"><circle cx="9" cy="9" r="5.6" fill="none" stroke="#56606e" stroke-width="1.1"/><circle cx="13" cy="4.6" r="2.9" fill="#fbfbfb" stroke="#56606e" stroke-width="1.1"/><path d="M11.2 2.8l3.6 3.6" stroke="#56606e" stroke-width="1"/></svg>
<div class="t" style="left:282.5px;top:308px;font-size:12.1px;line-height:14px">Size</div>
<div class="t" style="left:334.5px;top:288.5px;font-size:8.6px;line-height:7.8px;color:#4d5866;text-align:center;width:18px;letter-spacing:0.3px;-webkit-text-stroke:0.2px #4d5866">Abc<br>123</div>
<div class="t" style="left:328.5px;top:308px;font-size:12.1px;line-height:14px">Label</div>
<div class="t" style="left:227.5px;top:348px;font-size:12.1px;line-height:14px">Detail</div>
<div class="t" style="left:275px;top:348px;font-size:12.3px;line-height:14px">Tooltip</div>
<svg class="a" style="left:221px;top:383px" width="18" height="16"><circle cx="9" cy="9" r="5.6" fill="none" stroke="#56606e" stroke-width="1.1"/><circle cx="13" cy="4.6" r="2.9" fill="#f8f8f8" stroke="#56606e" stroke-width="1.1"/><path d="M11.2 2.8l3.6 3.6" stroke="#56606e" stroke-width="1"/></svg>
<div class="pillg" style="left:243px;top:382px;width:121px;height:20.5px"></div>
<div class="t" style="left:253px;top:385.5px;font-size:11.95px;line-height:14px">SUM(Probability)</div>
<div class="t" style="left:221px;top:409px;font-size:8.6px;line-height:7.8px;color:#4d5866;text-align:center;width:18px;letter-spacing:0.3px;-webkit-text-stroke:0.2px #4d5866">Abc<br>123</div>
<div class="pill" style="left:243px;top:406px;width:121px;height:20.5px"></div>
<div class="t" style="left:253px;top:409.5px;font-size:11.7px;line-height:14px">Title</div>
<svg class="a" style="left:220px;top:431px" width="20" height="18"><circle cx="6.4" cy="10.6" r="4.3" fill="#e0651c"/><circle cx="14.3" cy="10.6" r="4.3" fill="#ef8a2c"/><circle cx="10.4" cy="5.6" r="5.2" fill="#f8f8f8"/><circle cx="10.4" cy="5.6" r="4.4" fill="#5b8bbb"/></svg>
<div class="pillg" style="left:243px;top:430px;width:121px;height:20.5px"></div>
<div class="t" style="left:253px;top:433.5px;font-size:11.95px;line-height:14px">SUM(Projected To..</div>
<div class="a" style="left:216px;top:500px;width:153px;height:36px;background:#fff"></div>
<div class="t" style="left:221px;top:484.5px;font-size:11.7px;line-height:14px">SUM(Projected Total)</div>
<div class="a" style="left:221px;top:504px;width:144px;height:16px;border:1px solid #a39a8e;background:linear-gradient(90deg,#c5c5c5 0%,#b8c9a8 25%,#98c070 50%,#74b33c 75%,#4fa500 100%)"></div>
<div class="t" style="left:221px;top:520px;font-size:11px;line-height:14px;color:#555;letter-spacing:0.9px">798</div>
<div class="t" style="left:327.5px;top:520px;font-size:11px;line-height:14px;color:#555;width:40px;text-align:right;letter-spacing:0.7px;margin-right:-0.7px">72,510</div>
<!--/MID-->
<!--SHELVES-->
<svg class="a" style="left:381px;top:94px" width="13" height="14"><g fill="#aab2bd"><rect x="1" y="4.5" width="3" height="9"/><rect x="5" y="4.5" width="3" height="9"/><rect x="9" y="4.5" width="3" height="9"/></g><g fill="#59677a"><rect x="1" y="1" width="3" height="2.5"/><rect x="5" y="1" width="3" height="2.5"/><rect x="9" y="1" width="3" height="2.5"/></g></svg>
<div class="t" style="left:398.5px;top:96px;font-size:12px;line-height:14px">Columns</div>
<svg class="a" style="left:380px;top:127px" width="14" height="13"><g fill="#59677a"><rect x="1" y="1" width="3" height="3"/><rect x="1" y="5" width="3" height="3"/><rect x="1" y="9" width="3" height="3"/></g><g fill="#aab2bd"><rect x="5" y="1" width="9" height="3"/><rect x="5" y="5" width="9" height="3"/><rect x="5" y="9" width="9" height="3"/></g></svg>
<div class="t" style="left:398.5px;top:128px;font-size:12px;line-height:14px">Rows</div>
<!--/SHELVES-->
<!--BOTTOM-->
<div class="a" style="left:8px;top:773px;width:1035px;height:1px;background:#bdbdbd"></div>
<div class="a" style="left:1042px;top:83px;width:1px;height:690px;background:#fff"></div>
<div class="a" style="left:210px;top:772px;width:833px;height:1px;background:#fff"></div>
<div class="a" style="left:138px;top:774px;width:74px;height:29px;background:#fff;border-left:1px solid #5a5a5a;border-right:1px solid #5a5a5a"></div>
<svg class="a" style="left:15px;top:780px" width="14" height="18"><rect x="1.6" y="1.6" width="10" height="14.2" rx="2.5" fill="#fff" stroke="#4f5f74" stroke-width="1.3"/><path d="M2.2 4.4h8.8" stroke="#4f5f74" stroke-width="1.2"/></svg>
<div class="t" style="left:32.5px;top:782px;font-size:11.3px;line-height:14px;color:#6f747a">Data Source</div>
<div class="t" style="left:145px;top:781.5px;font-size:11.9px;line-height:14px;font-weight:bold;color:#333">Sheet 1</div>
<svg class="a" style="left:214px;top:776px" width="90" height="24">
<g stroke="#56667c" stroke-width="1.3" fill="#fff">
<rect x="6.65" y="8.75" width="14" height="10.2"/>
<rect x="38.65" y="8.75" width="14" height="10.2"/>
<path d="M70.6 9.5v9.8l7.3-1.2 7.2 1.2V8.5l-7.2 1.2-7.3-1.2z"/>
</g>
<g fill="#56667c">
<rect x="9" y="15" width="2" height="4"/><rect x="13" y="11" width="2" height="8"/><rect x="17" y="12.8" width="2" height="6.2"/>
<rect x="12" y="15" width="2" height="1.3" fill="#fff"/>
</g>
<path d="M45.4 8.8v10M38.8 13.7h14" stroke="#56667c" stroke-width="1.3"/>
<path d="M77.9 9.7v8.4" stroke="#56667c" stroke-width="1.2"/>
<g fill="#e3e3e3"><rect x="5" y="4" width="6" height="6"/><rect x="37" y="4" width="6" height="6"/><rect x="69" y="4" width="6" height="6"/></g>
<path d="M8.8 5.6v6.4M5.6 8.8h6.4" stroke="#3366c2" stroke-width="2.2"/>
<path d="M40.9 5.6v6.4M37.7 8.8h6.4" stroke="#3366c2" stroke-width="2.2"/>
<path d="M72.8 5.6v6.4M69.6 8.8h6.4" stroke="#3366c2" stroke-width="2.2"/>
</svg>
<div class="t" style="left:11px;top:808px;font-size:12px;line-height:14px">23 marks</div>
<div class="t" style="left:78.5px;top:808px;font-size:12px;line-height:14px">1 row by 1 column</div>
<div class="t" style="left:198px;top:808px;font-size:11.4px;line-height:14px">SUM(Projected Total): 199,577</div>
<div class="ssep" style="left:676px"></div><div class="ssep" style="left:803px"></div><div class="ssep" style="left:830px"></div><div class="ssep" style="left:857px"></div><div class="ssep" style="left:904px"></div><div class="ssep" style="left:976px"></div>
<svg class="a" style="left:908px;top:806px" width="135" height="16">
<g fill="#a8a8a8"><rect x="6" y="4" width="1.3" height="7"/><path d="M12.5 4v7l-4.5-3.5z"/><path d="M25 4v7l-4-3.5z"/><path d="M38 4v7l4-3.5z"/><path d="M53 4v7l4-3.5z"/><rect x="57.5" y="4" width="1.3" height="7"/></g>
<g fill="#a8a8a8"><rect x="77" y="2" width="3" height="3"/><rect x="81" y="2" width="3" height="3"/><rect x="85" y="2" width="3" height="3"/><rect x="77" y="6" width="3" height="3"/><rect x="81" y="6" width="3" height="3"/><rect x="85" y="6" width="3" height="3"/><rect x="77" y="10" width="3" height="3"/><rect x="81" y="10" width="3" height="3"/><rect x="85" y="10" width="3" height="3"/>
<rect x="97" y="2" width="11" height="5.5"/><rect x="97" y="9" width="3" height="4"/><rect x="101" y="9" width="3" height="4"/><rect x="105" y="9" width="3" height="4"/></g>
<rect x="118" y="2" width="11" height="11" fill="#4d4d4d"/>
</svg>
<!--/BOTTOM-->

</body></html>
